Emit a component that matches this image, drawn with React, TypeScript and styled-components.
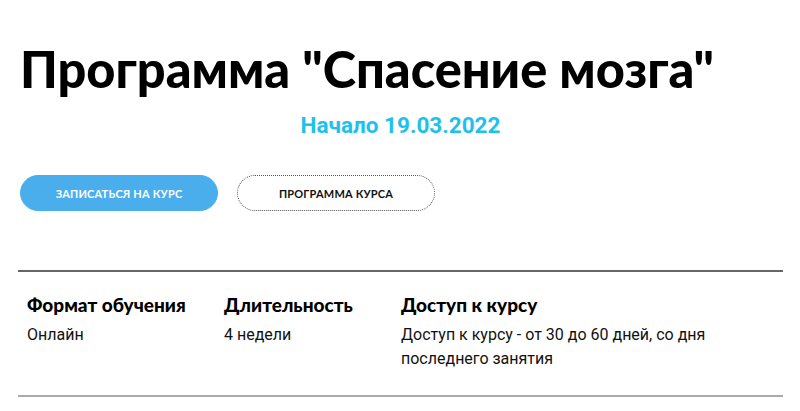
import React from "react";
import styled, { createGlobalStyle } from "styled-components";

const info = [
  { title: "Формат обучения", text: "Онлайн", width: "197px" },
  { title: "Длительность", text: "4 недели", width: "177px" },
  {
    title: "Доступ к курсу",
    text: "Доступ к курсу - от 30 до 60 дней, со дня последнего занятия",
    width: "330px",
  },
];

const App: React.FC = () => {
  return (
    <Root>
      <GlobalStyle />
      <Title>Программа "Спасение мозга"</Title>
      <Start>Начало 19.03.2022</Start>
      <Buttons>
        <Button $primary>Записаться на курс</Button>
        <Button>Программа курса</Button>
      </Buttons>
      <Info>
        {info.map((item) => (
          <Column key={item.title} $width={item.width}>
            <ColumnTitle>{item.title}</ColumnTitle>
            <ColumnText>{item.text}</ColumnText>
          </Column>
        ))}
      </Info>
    </Root>
  );
};

export default App;

const GlobalStyle = createGlobalStyle`
  html, body {
    margin: 0;
    padding: 0;
    background: #ffffff;
  }
`;

const Root = styled.div`
  width: 800px;
  padding: 37px 17px 0 18px;
  box-sizing: border-box;
  color: #000000;
`;

const Title = styled.h1`
  margin: 0 0 0 2px;
  font-family: Lato, "Open Sans", sans-serif;
  font-size: 50.5px;
  font-weight: 900;
  line-height: 64px;
  white-space: nowrap;
`;

const Start = styled.div`
  margin-top: 11px;
  font-family: Roboto, sans-serif;
  font-size: 22.5px;
  font-weight: 700;
  line-height: 26px;
  color: #1ec1ec;
  text-align: center;
`;

const Buttons = styled.div`
  display: flex;
  gap: 19px;
  margin: 37px 0 0 2px;
`;

const Button = styled.button<{ $primary?: boolean }>`
  width: 198px;
  height: 36px;
  padding: 0;
  border-radius: 18px;
  border: 1px ${(p) => (p.$primary ? "solid #4aaeec" : "dotted #555555")};
  background: ${(p) => (p.$primary ? "#4aaeec" : "#ffffff")};
  color: ${(p) => (p.$primary ? "#ffffff" : "#111111")};
  font-family: Lato, sans-serif;
  font-size: 11px;
  font-weight: 700;
  letter-spacing: 0.2px;
  text-transform: uppercase;
  cursor: pointer;
`;

const Info = styled.div`
  display: flex;
  margin-top: 59px;
  padding: 21px 9px 0;
  height: 127px;
  box-sizing: border-box;
  border-top: 2px solid #666666;
  border-bottom: 2px solid #aaaaaa;
`;

const Column = styled.div<{ $width: string }>`
  width: ${(p) => p.$width};
`;

const ColumnTitle = styled.div`
  font-family: Lato, sans-serif;
  font-size: 19px;
  font-weight: 900;
  line-height: 24px;
`;

const ColumnText = styled.div`
  margin-top: 6px;
  font-family: Roboto, sans-serif;
  font-size: 16px;
  line-height: 24px;
  color: #111111;
`;
